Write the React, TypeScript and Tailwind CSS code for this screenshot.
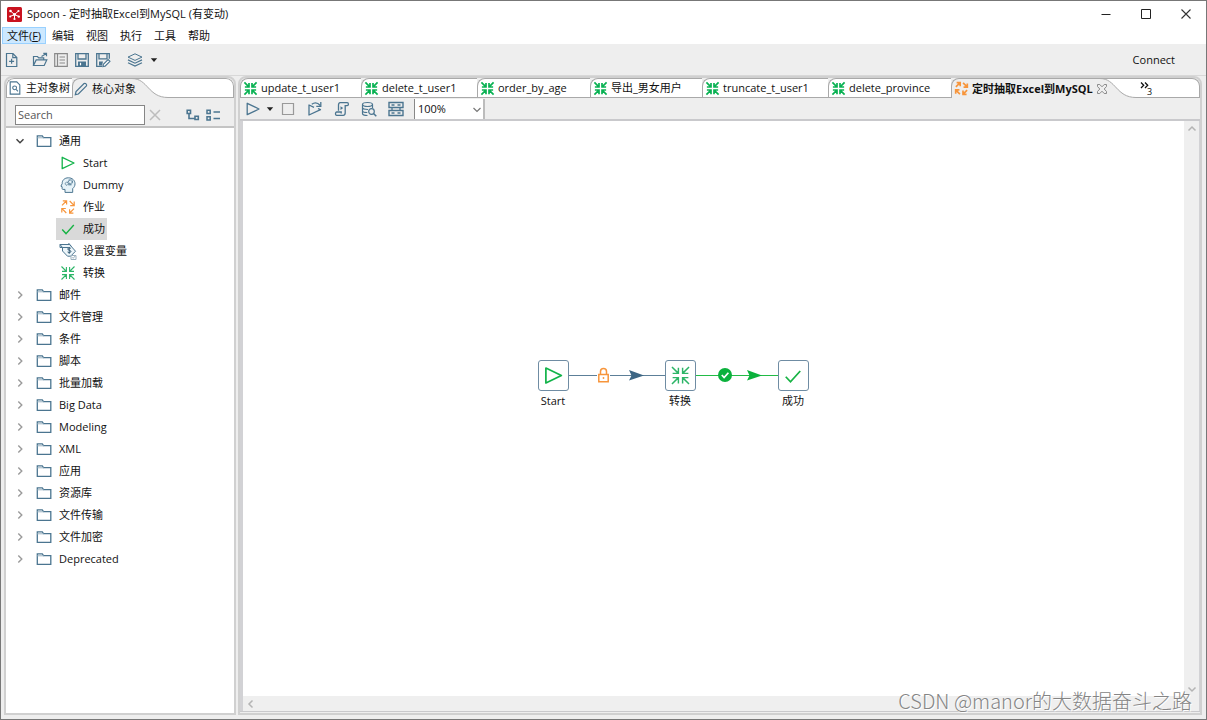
import React, { useState } from "react";

type IconProps = { className?: string };

function Svg({ className = "size-4", box = 16, children }: { className?: string; box?: number; children: React.ReactNode }) {
  return (
    <svg viewBox={`0 0 ${box} ${box}`} className={`${className} shrink-0`} fill="none" aria-hidden="true">
      {children}
    </svg>
  );
}

const BLUE = "#4b7590";
const GREEN = "#12b34a";
const ORANGE = "#f7953b";

function TransIcon({ className, bold }: IconProps & { bold?: boolean }) {
  return (
    <Svg className={className}>
      <g stroke={bold ? "#08b152" : "#2cb567"} strokeWidth={bold ? 1.8 : 1.1}>
        <path d="M1.5 1.5 6 6M6.4 2v4.4H2M14.5 1.5 10 6M9.6 2v4.4H14M1.5 14.5 6 10M2 9.6h4.4V14M14.5 14.5 10 10M14 9.6H9.6V14" />
      </g>
    </Svg>
  );
}

function JobIcon({ className, bold }: IconProps & { bold?: boolean }) {
  return (
    <Svg className={className}>
      <g stroke={ORANGE} strokeWidth={bold ? 1.8 : 1.2}>
        <path d="M2 6.3 6.3 2M2.8 1.8h3.8v3.8M9.7 2 14 6.3M14.2 2.6v4h-4M14 9.7 9.7 14M13.4 14.2H9.6v-4M6.3 14 2 9.7M1.8 13.6V9.5h4" />
      </g>
    </Svg>
  );
}

function PlayIcon({ className, color = GREEN }: IconProps & { color?: string }) {
  return (
    <Svg className={className}>
      <path d="M2.2 2.3v11.4L14 8z" stroke={color} strokeWidth="1.3" strokeLinejoin="round" />
    </Svg>
  );
}

function CheckIcon({ className }: IconProps) {
  return (
    <Svg className={className}>
      <path d="m2.2 8.6 3.8 4L13.8 4" stroke="#17b344" strokeWidth="1.4" />
    </Svg>
  );
}

function HeadIcon() {
  return (
    <Svg>
      <path
        d="M5 15.4v-3H2.8c-.5 0-.7-.4-.7-.9V9.7L.9 9.2l1.3-2.6C2 3.2 4.600.8 8.4.8c3.800 0 6.600 2.500 6.600 6 0 2.200-1 3.600-2.300 4.800v3.800z"
        fill="#e6f2f8"
        stroke={BLUE}
        strokeWidth="1"
      />
      <circle cx="6.700" cy="6.700" r="1.500" stroke={BLUE} strokeDasharray="1.200 .5" />
      <circle cx="10.300" cy="4.800" r="2" stroke={BLUE} strokeWidth="1.200" strokeDasharray="1.200 .5" />
      <path d="M8.300 7.800h3.200" stroke={BLUE} />
    </Svg>
  );
}

function VariableIcon() {
  return (
    <Svg className="size-[18px]" box={18}>
      <path d="M1 2.500h9.500l6 6.700-4.800 5H8.500L3.500 9V5.500H1z" fill="#edf6fa" stroke={BLUE} />
      <path d="M1 2.500 3.500 5.500h6M9.500 1l3 3.500" stroke={BLUE} />
      <path d="M11.800 6.300c-1.500-1-3.300-.3-3 .9.300 1.200 3 .8 3.100 2.200 0 1.300-2.100 1.600-3.300.6M10.200 5v6.800" stroke="#2c5570" />
      <path d="M12 13.500h5v4h-5zM13.200 15.300l1 1 2-2.300" fill="#fff" stroke="#9bb0be" />
    </Svg>
  );
}

function FolderIcon() {
  return (
    <Svg>
      <path d="M1.300 13.300V2.900h5l1.200 1.700h7.300v8.700z" stroke={BLUE} strokeWidth="1.300" />
      <path d="M1.300 4.800h6.300" stroke="#9ab2c1" />
    </Svg>
  );
}

function Chevron({ open }: { open?: boolean }) {
  return (
    <Svg className="size-2.5" box={10}>
      {open ? (
        <path d="m1.500 3.200 3.500 3.500 3.500-3.500" stroke="#444" strokeWidth="1.500" />
      ) : (
        <path d="M3.300 1.500 6.800 5 3.300 8.500" stroke="#9b9b9b" strokeWidth="1.400" />
      )}
    </Svg>
  );
}

function Caret() {
  return (
    <Svg className="size-2" box={8}>
      <path d="M.8 2.300h6.400L4 6z" fill="#222" />
    </Svg>
  );
}

const toolbarIcons = {
  file: (
    <Svg>
      <path d="M2.500 1.500h6.500L12.800 5.500v9H2.500zM8.800 1.700v4h3.800M7.600 6.800v5M5.100 9.300h5" stroke={BLUE} strokeWidth="1.200" />
    </Svg>
  ),
  open: (
    <Svg>
      <path d="M1.500 13.500v-9h4l1.200 1.400h5v2M1.500 13.500l2.700-5.600h10.600l-2.600 5.600zM9.500 4.500 14 1.700M11.300 1.300h3.200v3" stroke={BLUE} strokeWidth="1.200" />
    </Svg>
  ),
  list: (
    <Svg>
      <path d="M1.700 1.700h12.600v12.600H1.700zM4.500 1.700v12.600" stroke="#8a8a8a" strokeWidth="1.200" />
      <path d="M6.500 5h5.500M6.500 8h5.500M6.500 11h5.500" stroke="#8a8a8a" />
    </Svg>
  ),
  save: (
    <Svg>
      <path d="M1.700 1.700h12.600v12.600H1.700zM4 2v5h8V2" stroke={BLUE} strokeWidth="1.300" />
      <path d="M4 9.500h8v4.500H4z" fill={BLUE} />
      <path d="M6.500 10.800v2.500" stroke="#fff" strokeWidth="1.200" />
    </Svg>
  ),
  saveAs: (
    <Svg>
      <path d="M7 14.300H1.700V1.700h12.600v5M4 2v4.800h8V2" stroke={BLUE} strokeWidth="1.300" />
      <path d="M4 9.500h4l-1 4H4z" fill={BLUE} />
      <path d="m8.300 12.300 4.800-4.800 1.800 1.800-4.800 4.800-2.200.4z" fill="#fff" stroke={BLUE} strokeWidth="1.200" />
    </Svg>
  ),
  layers: (
    <Svg>
      <path d="m8 1.800 7 3.300-7 3.300-7-3.300z" stroke={BLUE} />
      <path d="m1 7.900 7 3.300 7-3.300M1 10.800l7 3.300 7-3.300" stroke={BLUE} strokeWidth="1.200" />
    </Svg>
  ),
};

const runIcons = {
  stop: (
    <Svg>
      <path d="M2.500 2.500h11v11h-11z" stroke="#999" strokeWidth="1.200" />
    </Svg>
  ),
  replay: (
    <Svg>
      <path d="M7 6.300 2 4v10l11.500-5.300-2.500-1.200" stroke={BLUE} strokeWidth="1.300" strokeLinejoin="round" />
      <path d="M4.800 3.300c2.700-2 6-1.500 8.500 1.200" stroke={BLUE} strokeWidth="1.300" />
      <path d="M9.300 5.300h4.500V1" stroke={BLUE} strokeWidth="1.300" />
    </Svg>
  ),
  script: (
    <Svg>
      <path d="M4.500 9.800V4c0-1.500.5-2.300 1.700-2.300h7c1.600 0 1.600 2.900 0 2.900h-2v7.200c0 1.700-.7 2.500-2 2.500H2.700c-1.600 0-1.600-3.300 0-3.300h4.500v1.500" stroke={BLUE} strokeWidth="1.300" />
      <path d="m6.500 5.200 2.700 1.900-2.700 1.900z" fill={BLUE} />
    </Svg>
  ),
  database: (
    <Svg>
      <ellipse cx="6.500" cy="3.500" rx="5" ry="2" stroke={BLUE} strokeWidth="1.200" />
      <path d="M1.500 3.500v9c0 1.300 2.500 2 5 2M11.500 3.500V7M1.500 6.600c0 1.200 3 1.900 5.500 1.900M1.500 9.700c0 1 2.500 1.800 4.800 1.800" stroke={BLUE} strokeWidth="1.200" />
      <circle cx="10.500" cy="10.500" r="2.800" stroke={BLUE} strokeWidth="1.200" />
      <path d="m12.500 12.500 2.800 2.800" stroke={BLUE} strokeWidth="1.500" />
    </Svg>
  ),
  grid: (
    <Svg>
      <path d="M1 1.500h14v5H1zM1 9.500h14v5H1z" stroke={BLUE} strokeWidth="1.400" />
      <path d="M3.500 4h3M9.500 4h3M3.500 12h3M9.500 12h3M4 6.500v3M12 6.500v3" stroke={BLUE} strokeWidth="1.300" />
    </Svg>
  ),
};

function IconButton({ label, className = "", children }: { label: string; className?: string; children: React.ReactNode }) {
  return (
    <button type="button" aria-label={label} className={`flex shrink-0 items-center justify-center ${className}`}>
      {children}
    </button>
  );
}

function TabCurve() {
  return (
    <svg viewBox="0 0 40 20" className="h-5 w-10 shrink-0" fill="none" aria-hidden="true">
      <path d="M0 .5C16 .5 16 19.500 36 19.500H40V.5Z" fill="#fff" />
      <path d="M0 .5C16 .5 16 19.500 36 19.500H40M0 .5H40" stroke="#a9a9a9" />
    </svg>
  );
}

const menus = ["编辑", "视图", "执行", "工具", "帮助"];

const tabs = [
  { name: "update_t_user1", width: "w-[121px]" },
  { name: "delete_t_user1", width: "w-[116px]" },
  { name: "order_by_age", width: "w-[113px]" },
  { name: "导出_男女用户", width: "w-[112px]" },
  { name: "truncate_t_user1", width: "w-[126px]" },
  { name: "delete_province", width: "w-[123px]" },
];

const general = [
  { name: "Start", icon: <PlayIcon /> },
  { name: "Dummy", icon: <HeadIcon /> },
  { name: "作业", icon: <JobIcon /> },
  { name: "成功", icon: <CheckIcon /> },
  { name: "设置变量", icon: <VariableIcon /> },
  { name: "转换", icon: <TransIcon /> },
];

const folders = ["邮件", "文件管理", "条件", "脚本", "批量加载", "Big Data", "Modeling", "XML", "应用", "资源库", "文件传输", "文件加密", "Deprecated"];

function TitleBar() {
  return (
    <header className="flex h-[26px] shrink-0 items-center bg-white pl-[6px]">
      <Svg className="size-[15px]" box={15}>
        <rect width="15" height="15" rx="1.500" fill="#c9121f" />
        <path d="M7.500 7.500 3.500 4M7.500 7.500l4-3.500M7.500 7.500 3 9.500M7.500 7.500l4.300 2M7.500 7.500V12" stroke="#fff" strokeWidth="1" />
        <g fill="#fff">
          <circle cx="7.500" cy="7.500" r="1.500" />
          <circle cx="3.500" cy="4" r="1.300" />
          <circle cx="11.500" cy="4" r="1.100" />
          <circle cx="3.200" cy="9.600" r="1" />
          <circle cx="11.800" cy="9.600" r="1.200" />
          <circle cx="7.500" cy="12" r="1.100" />
        </g>
      </Svg>
      <h1 className="ml-[5px] text-[11px]">Spoon - 定时抽取Excel到MySQL (有变动)</h1>
      <div className="ml-auto flex">
        <IconButton label="Minimize" className="w-10">
          <Svg className="size-3" box={12}><path d="M1.500 6.500h9" stroke="#222" /></Svg>
        </IconButton>
        <IconButton label="Maximize" className="w-10">
          <Svg className="size-3" box={12}><path d="M1.500 1.500h9v9h-9z" stroke="#222" /></Svg>
        </IconButton>
        <IconButton label="Close" className="w-10">
          <Svg className="size-3" box={12}><path d="m1.500 1.500 9 9m0-9-9 9" stroke="#333" strokeWidth="1.100" /></Svg>
        </IconButton>
      </div>
    </header>
  );
}

function SidePanel() {
  const [selected, setSelected] = useState("成功");
  return (
    <aside className="flex w-[232px] shrink-0 flex-col rounded-t-lg border-2 border-[#d0d0d0] bg-[#eee]">
      <div className="flex h-5 shrink-0 overflow-hidden rounded-t-lg">
        <button type="button" className="flex w-[66px] items-center gap-1 rounded-tl-lg border-t border-b border-l border-[#a9a9a9] bg-white pl-px whitespace-nowrap">
          <Svg className="size-3.5">
            <path d="M2.500 1h7.500l3.500 3.500V15h-11z" stroke={BLUE} strokeWidth="1.300" />
            <circle cx="7.600" cy="7.800" r="2.200" stroke={BLUE} strokeWidth="1.200" />
            <path d="m9.300 9.500 2 2.300" stroke={BLUE} strokeWidth="1.200" />
          </Svg>
          主对象树
        </button>
        <button type="button" className="flex w-[60px] items-center gap-1 rounded-tl-lg border-t border-l border-[#a9a9a9] pl-px whitespace-nowrap">
          <Svg className="size-3.5">
            <path d="M1.500 14.500 2.300 11 11.500 1.800c1.500-1 3.700 1.200 2.700 2.700L5 13.700z" stroke={BLUE} strokeWidth="1.400" />
          </Svg>
          核心对象
        </button>
        <TabCurve />
        <div className="flex-1 rounded-tr-lg border-t border-r border-b border-[#a9a9a9] bg-white" />
      </div>
      <div className="flex h-[30px] shrink-0 items-center border-b-2 border-[#c4c4c4] pt-[5px] pl-[9px]">
        <input
          aria-label="Search"
          placeholder="Search"
          className="h-5 w-[130px] border border-[#868686] bg-white px-[2px] text-[11px] outline-none placeholder:text-[#555]"
        />
        <IconButton label="Clear search" className="ml-1 size-3">
          <Svg className="size-3" box={12}><path d="m1 1 10 10m0-10L1 11" stroke="#bdbdbd" strokeWidth="1.500" /></Svg>
        </IconButton>
        <IconButton label="Expand all" className="ml-[25px]">
          <Svg className="size-3.5" box={14}>
            <path d="M1.200 2.200h3.300v3.300H1.200zM9 8.200h3.300v3.300H9zM3 6v4.500h6" stroke={BLUE} strokeWidth="1.600" />
          </Svg>
        </IconButton>
        <IconButton label="Collapse all" className="ml-[6px]">
          <Svg className="size-3.5" box={14}>
            <path d="M1 2.200h3.200v3.200H1zM1 8.700h3.200v3.200H1zM7.500 4H14M7.500 10.500H14" stroke={BLUE} strokeWidth="1.500" />
          </Svg>
        </IconButton>
      </div>
      <nav aria-label="核心对象" className="min-h-0 flex-1 overflow-hidden bg-white pt-[2px]">
        <ul>
          <li>
            <button type="button" className="flex h-[22px] items-center pl-[9px]">
              <Chevron open />
              <span className="ml-[11px] flex items-center gap-[7px]"><FolderIcon />通用</span>
            </button>
            <ul>
              {general.map((g) => (
                <li key={g.name} className="flex h-[22px] pl-[50px]">
                  <button
                    type="button"
                    onClick={() => setSelected(g.name)}
                    className={`flex items-center gap-[7px] pr-[2px] pl-[4px] ${selected === g.name ? "bg-[#d9d9d9]" : ""}`}
                  >
                    <span className="flex w-4 shrink-0 justify-center">{g.icon}</span>
                    {g.name}
                  </button>
                </li>
              ))}
            </ul>
          </li>
          {folders.map((f) => (
            <li key={f}>
              <button type="button" className="flex h-[22px] items-center pl-[9px]">
                <Chevron />
                <span className="ml-[11px] flex items-center gap-[7px]"><FolderIcon />{f}</span>
              </button>
            </li>
          ))}
        </ul>
      </nav>
    </aside>
  );
}

function Node({ name, className, children }: { name: string; className: string; children: React.ReactNode }) {
  return (
    <button type="button" className={`absolute top-[239px] flex w-[60px] flex-col items-center gap-[2px] ${className}`}>
      <span className="flex size-[31px] items-center justify-center rounded-[3px] border border-[#6f8ca3] bg-white">{children}</span>
      <span className="leading-4">{name}</span>
    </button>
  );
}

function Canvas() {
  return (
    <div className="relative min-w-0 flex-1 overflow-hidden bg-white">
      <svg viewBox="0 0 210 20" className="absolute top-[244px] left-[325px] h-5 w-[210px]" fill="none" aria-hidden="true">
        <path d="M0 10.500H98" stroke="#5c7f98" />
        <path d="M61 5 76 10.500 61 15.500 63.500 10.500z" fill="#3d6684" />
        <rect x="29" y="3" width="13" height="15" fill="#fff" />
        <path d="M30.800 9.500h9.400v7.300h-9.400zM32.500 9.500V6.500c0-4 6-4 6 0v3" stroke={ORANGE} strokeWidth="1.500" />
        <circle cx="35.500" cy="13" r=".9" fill={ORANGE} />
        <path d="M127 10.500h83" stroke="#22bb46" />
        <circle cx="157" cy="10" r="7" fill="#0bb13c" />
        <path d="m153.800 10 2.300 2.500 4.300-4.700" stroke="#fff" strokeWidth="1.700" />
        <path d="M179 5 194 10.500 179 15.500 181.500 10.500z" fill="#0bb13c" />
      </svg>
      <Node name="Start" className="left-[280px]"><PlayIcon className="size-[21px]" /></Node>
      <Node name="转换" className="left-[407px]"><TransIcon className="size-[21px]" /></Node>
      <Node name="成功" className="left-[520px]"><CheckIcon className="size-5" /></Node>
    </div>
  );
}

function Editor() {
  return (
    <main className="flex min-w-0 flex-1 flex-col rounded-t-lg border-2 border-[#d0d0d0] bg-[#eee]">
      <div className="flex h-5 shrink-0">
        {tabs.map((t) => (
          <button
            key={t.name}
            type="button"
            className={`flex shrink-0 items-center gap-[3px] rounded-tl-lg border-t border-b border-l border-[#a9a9a9] bg-white pl-[2px] whitespace-nowrap ${t.width}`}
          >
            <TransIcon bold className="size-[15px]" />
            {t.name}
          </button>
        ))}
        <div className="flex shrink-0 items-center rounded-tl-lg border-t border-l border-[#a9a9a9] pl-[2px]">
          <button type="button" className="flex w-[138px] items-center gap-[3px] font-bold whitespace-nowrap">
            <JobIcon bold className="size-[15px]" />
            定时抽取Excel到MySQL
          </button>
          <IconButton label="Close tab" className="ml-1">
            <Svg className="size-3" box={12}>
              <path d="M1.500 1.500h2.300L6 3.800l2.200-2.300h2.300v2L8.200 6l2.300 2.500v2H8.200L6 8.200l-2.200 2.300H1.500v-2L3.800 6 1.500 3.500z" stroke="#8b8b8b" />
            </Svg>
          </IconButton>
        </div>
        <div className="-ml-2 flex"><TabCurve /></div>
        <div className="min-w-0 flex-1 rounded-tr-lg border-t border-r border-b border-[#a9a9a9] bg-white">
          <button type="button" aria-label="Show 3 more tabs" className="flex items-start">
            <Svg className="mt-[2px] size-[9px]" box={9}><path d="m1 1.500 2.700 2.700L1 7M5 1.500l2.700 2.700L5 7" stroke="#111" strokeWidth="1.300" /></Svg>
            <span className="mt-[7px] -ml-[2px] text-[9px] leading-3">3</span>
          </button>
        </div>
      </div>
      <div className="flex h-[23px] shrink-0 items-center border-b-2 border-[#c9c9cc] pt-px pl-[5px]">
        <IconButton label="Run"><PlayIcon color={BLUE} /></IconButton>
        <IconButton label="Run options" className="ml-[5px]"><Caret /></IconButton>
        <IconButton label="Stop" className="ml-[6px]">{runIcons.stop}</IconButton>
        <IconButton label="Replay" className="ml-[11px]">{runIcons.replay}</IconButton>
        <IconButton label="SQL" className="ml-[11px]">{runIcons.script}</IconButton>
        <IconButton label="Explore database" className="ml-[11px]">{runIcons.database}</IconButton>
        <IconButton label="Show results" className="ml-[11px]">{runIcons.grid}</IconButton>
        <div className="relative ml-[10px] h-full w-[71px] border-r-2 border-l border-r-[#bcbcbc] border-l-[#888]">
          <select aria-label="Zoom" className="h-full w-full appearance-none bg-white pl-[3px] text-[11px] outline-none">
            <option>100%</option>
            <option>200%</option>
          </select>
          <svg viewBox="0 0 10 10" className="pointer-events-none absolute top-1.5 right-[1px] size-2.5" fill="none" aria-hidden="true">
            <path d="m1.500 3 3.500 3.500 3.500-3.500" stroke="#777" strokeWidth="1.200" />
          </svg>
        </div>
      </div>
      <div className="flex min-h-0 flex-1 border-r border-l-3 border-[#d2d2d5]">
        <div className="flex min-w-0 flex-1 flex-col">
          <div className="flex min-h-0 flex-1"><Canvas /></div>
          <div className="flex h-[15px] shrink-0 items-center bg-[#efefef] pl-[3px]">
            <Svg className="size-2.5" box={10}><path d="M6.500 1.500 3 5l3.500 3.500" stroke="#b4b4b4" strokeWidth="1.500" /></Svg>
          </div>
        </div>
        <div className="flex w-[15px] shrink-0 flex-col items-center justify-between bg-[#efefef] pt-[3px] pb-[17px]">
          <Svg className="size-2.5" box={10}><path d="M1.500 6.500 5 3l3.500 3.500" stroke="#b4b4b4" strokeWidth="1.500" /></Svg>
          <Svg className="size-2.5" box={10}><path d="M1.500 3.500 5 7l3.500-3.500" stroke="#b4b4b4" strokeWidth="1.500" /></Svg>
        </div>
      </div>
      <div className="h-[2px] shrink-0 border-t border-[#c9c9cc]" />
    </main>
  );
}

export default function App() {
  return (
    <div className="relative flex h-screen flex-col overflow-hidden border border-[#777] bg-[#eee] font-['Open_Sans','Noto_Sans_CJK_SC',sans-serif] text-[11px] leading-4 text-[#111]">
      <TitleBar />
      <nav aria-label="Menu" className="flex h-[17px] shrink-0 bg-white pl-[1px]">
        <button type="button" className="flex w-11 items-center justify-center border border-[#99d1ff] bg-[#cce8ff] whitespace-nowrap">
          <span>文件(<span className="underline">F</span>)</span>
        </button>
        {menus.map((m) => (
          <button key={m} type="button" className="px-[6px] whitespace-nowrap">{m}</button>
        ))}
      </nav>
      <div className="flex h-[31px] shrink-0 items-center pl-[3px]">
        <IconButton label="New">{toolbarIcons.file}</IconButton>
        <IconButton label="Open" className="ml-[12px]">{toolbarIcons.open}</IconButton>
        <IconButton label="Explore" className="ml-[5px]">{toolbarIcons.list}</IconButton>
        <IconButton label="Save" className="ml-[5px]">{toolbarIcons.save}</IconButton>
        <IconButton label="Save as" className="ml-[5px]">{toolbarIcons.saveAs}</IconButton>
        <IconButton label="Perspective" className="ml-4">{toolbarIcons.layers}</IconButton>
        <IconButton label="Perspective options" className="ml-[7px]"><Caret /></IconButton>
        <button type="button" className="mr-[31px] ml-auto">Connect</button>
      </div>
      <div className="flex min-h-0 flex-1 gap-[2px] border-t border-[#d8d8d8] pr-[4px] pb-[4px] pl-[3px]">
        <SidePanel />
        <Editor />
      </div>
      <p className="pointer-events-none absolute right-[14px] bottom-[4px] font-['Noto_Sans_CJK_SC',sans-serif] text-[20px] leading-7 font-light whitespace-nowrap text-[#858585] [text-shadow:1px_1px_0_#fff]">
        CSDN @manor的大数据奋斗之路
      </p>
    </div>
  );
}
